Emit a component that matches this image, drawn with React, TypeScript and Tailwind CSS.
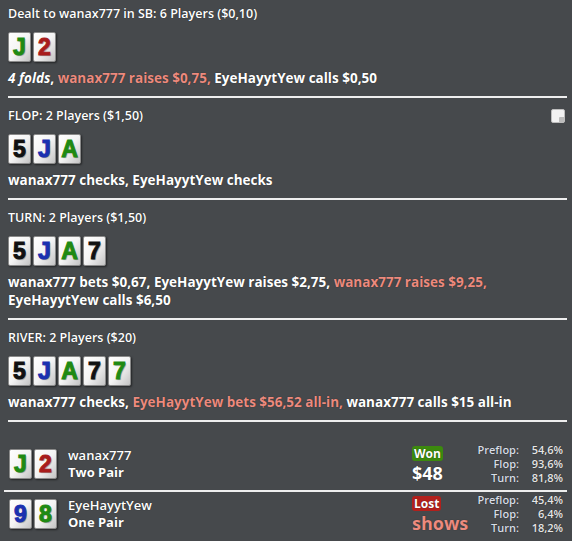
import React from 'react';

type Suit = 'k' | 'b' | 'g' | 'r';

const suitColor: Record<Suit, string> = {
  k: 'text-[#111111]',
  b: 'text-[#1a30b0]',
  g: 'text-[#1f8a12]',
  r: 'text-[#a81c1c]',
};

const Card: React.FC<{ rank: string; suit: Suit }> = ({ rank, suit }) => (
  <div
    className={`w-[23px] h-[30px] rounded-[2px] border border-[#8a8a8a] bg-gradient-to-br from-white via-[#f4f4f4] to-[#c4c4c4] shadow-[1px_1px_2px_rgba(0,0,0,0.5)] flex items-center justify-center font-['Liberation_Sans',sans-serif] font-bold text-[23px] leading-none [-webkit-text-stroke:1px_currentColor] [text-shadow:1px_1px_1px_rgba(0,0,0,0.35)] ${suitColor[suit]}`}
  >
    {rank}
  </div>
);

const Cards: React.FC<{ cards: [string, Suit][] }> = ({ cards }) => (
  <div className="flex gap-[2px]">
    {cards.map(([r, s], i) => (
      <Card key={i} rank={r} suit={s} />
    ))}
  </div>
);

const Hot: React.FC<{ children: React.ReactNode }> = ({ children }) => (
  <span className="text-[#ec8a7e]">{children}</span>
);

const Street: React.FC<{
  title: string;
  cards: [string, Suit][];
  children: React.ReactNode;
  note?: boolean;
}> = ({ title, cards, children, note }) => (
  <div className="relative pl-2 pr-[5px]">
    <div className="pt-[9px] pb-[9px] border-b-2 border-[#eeeeee]">
      <div className="text-[12.5px] leading-[18px] font-semibold">{title}</div>
      <div className="mt-[9px]">
        <Cards cards={cards} />
      </div>
      <div className="mt-[7px] text-[13.5px] leading-[18px] font-bold">{children}</div>
    </div>
    {note && (
      <div className="absolute right-[7px] top-[11px] w-[14px] h-[14px] rounded-[2px] bg-[#f2f2f2] border border-[#bdbdbd]">
        <div className="absolute right-0 bottom-0 w-[5px] h-[5px] bg-[#bcbcbc] rounded-tl-[1px]" />
      </div>
    )}
  </div>
);

const Stats: React.FC<{ rows: [string, string][] }> = ({ rows }) => (
  <div className="w-[95px] grid grid-cols-[1fr_44px] text-[11px] leading-[14px] font-semibold text-[#e6e6e6]">
    {rows.map(([k, v]) => (
      <React.Fragment key={k}>
        <div className="text-right text-[#d8dde6]">{k}:</div>
        <div className="text-right">{v}</div>
      </React.Fragment>
    ))}
  </div>
);

const Showdown: React.FC<{
  cards: [string, Suit][];
  name: string;
  hand: string;
  won: boolean;
  amount: string;
  stats: [string, string][];
}> = ({ cards, name, hand, won, amount, stats }) => (
  <div className="flex items-center pl-[9px] pr-[9px] h-[44px]">
    <Cards cards={cards} />
    <div className="ml-[11px] text-[13px] leading-[17px] font-bold">
      <div className="font-semibold">{name}</div>
      <div>{hand}</div>
    </div>
    <div className="ml-auto w-[56px] flex flex-col items-start gap-[2px]">
      <div
        className={`px-[2px] rounded-[3px] text-[12px] leading-[15px] font-bold ${won ? 'bg-[#3c8a0e]' : 'bg-[#b2201c]'}`}
      >
        {won ? 'Won' : 'Lost'}
      </div>
      <div className={`text-[18px] leading-[20px] font-bold ${won ? 'text-white' : 'text-[#ec8a7e]'}`}>{amount}</div>
    </div>
    <Stats rows={stats} />
  </div>
);

export default function App() {
  return (
    <div className="w-[572px] h-[541px] bg-[#46494c] text-white font-['Open_Sans',sans-serif] overflow-hidden [text-shadow:0_0_1px_rgba(0,0,0,0.6)]">
      <div className="pl-2 pr-[5px]">
        <div className="pt-[5px] pb-[9px] border-b-2 border-[#eeeeee]">
          <div className="text-[12.5px] leading-[18px] font-semibold">Dealt to wanax777 in SB: 6 Players ($0,10)</div>
          <div className="mt-[9px]">
            <Cards cards={[['J', 'g'], ['2', 'r']]} />
          </div>
          <div className="mt-[7px] text-[13.5px] leading-[18px] font-bold">
            <i>4 folds</i>, <Hot>wanax777 raises $0,75,</Hot> EyeHayytYew calls $0,50
          </div>
        </div>
      </div>

      <Street title="FLOP: 2 Players ($1,50)" cards={[['5', 'k'], ['J', 'b'], ['A', 'g']]} note>
        wanax777 checks, EyeHayytYew checks
      </Street>

      <Street title="TURN: 2 Players ($1,50)" cards={[['5', 'k'], ['J', 'b'], ['A', 'g'], ['7', 'k']]}>
        wanax777 bets $0,67, EyeHayytYew raises $2,75, <Hot>wanax777 raises $9,25,</Hot> EyeHayytYew calls $6,50
      </Street>

      <Street
        title="RIVER: 2 Players ($20)"
        cards={[['5', 'k'], ['J', 'b'], ['A', 'g'], ['7', 'k'], ['7', 'g']]}
      >
        wanax777 checks, <Hot>EyeHayytYew bets $56,52 all-in,</Hot> wanax777 calls $15 all-in
      </Street>

      <div className="mt-[20px]">
        <Showdown
          cards={[['J', 'g'], ['2', 'r']]}
          name="wanax777"
          hand="Two Pair"
          won
          amount="$48"
          stats={[['Preflop', '54,6%'], ['Flop', '93,6%'], ['Turn', '81,8%']]}
        />
        <div className="mt-[4px] ml-1 mr-[5px] border-b-2 border-[#eeeeee]" />
        <Showdown
          cards={[['9', 'b'], ['8', 'g']]}
          name="EyeHayytYew"
          hand="One Pair"
          won={false}
          amount="shows"
          stats={[['Preflop', '45,4%'], ['Flop', '6,4%'], ['Turn', '18,2%']]}
        />
      </div>
    </div>
  );
}
